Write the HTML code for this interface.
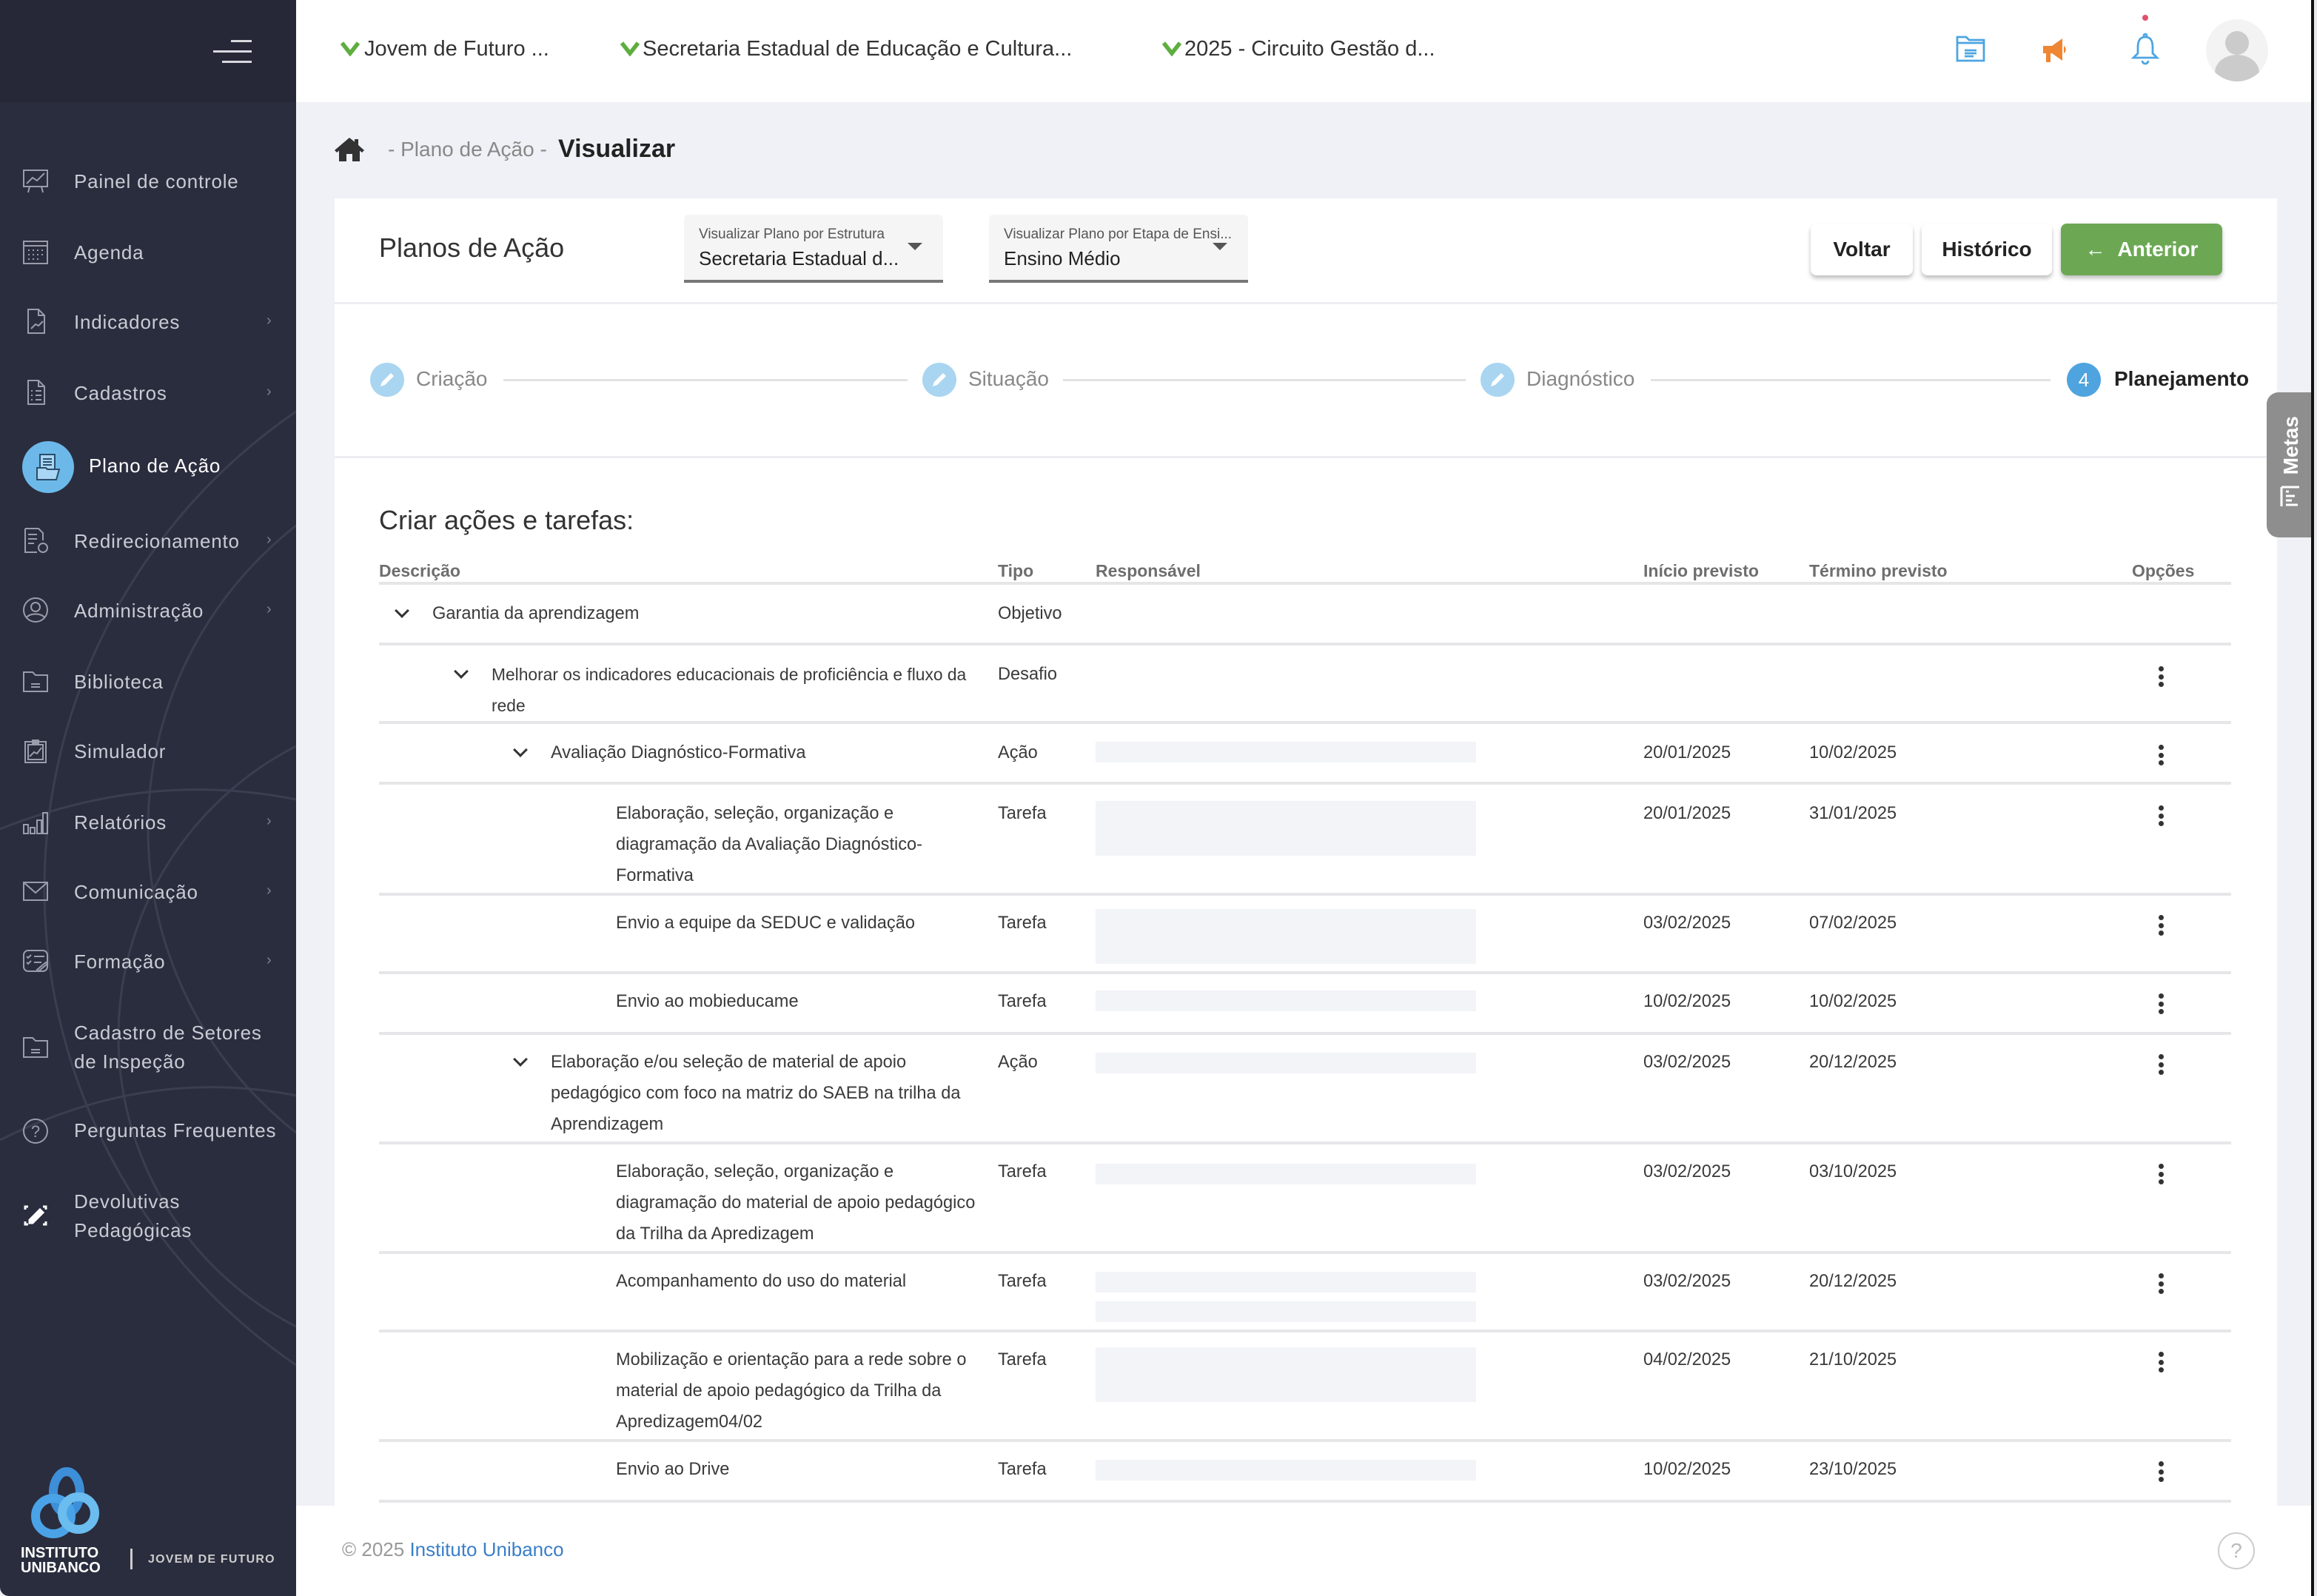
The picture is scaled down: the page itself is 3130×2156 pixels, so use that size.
<!DOCTYPE html>
<html><head><meta charset="utf-8">
<style>
*{margin:0;padding:0;box-sizing:border-box}
html,body{width:3130px;height:2156px;overflow:hidden;background:#1c1e2a}
#r{zoom:2;position:relative;width:1565px;height:1078px;font-family:"Liberation Sans",sans-serif;color:#333;background:#f0f1f6;overflow:hidden}
.a{position:absolute;white-space:nowrap}
#sb{position:absolute;left:0;top:0;width:200px;height:1078px;background:#2a2d3e;overflow:hidden;border-bottom-left-radius:6px}
#sbt{position:absolute;left:0;top:0;width:200px;height:69px;background:#262838}
.mi{position:absolute;left:50px;font-size:13px;color:#c9cbd4;letter-spacing:.4px;line-height:19.5px}
.ic{position:absolute;left:15px;width:18px;height:18px}
.chv{position:absolute;left:180px;font-size:10px;color:#7d8090}
#hd{position:absolute;left:200px;top:0;width:1363px;height:69px;background:#fff}
.hi{font-size:14.5px;color:#333;top:25px}
.card{position:absolute;left:226px;top:134px;width:1312px;height:900px;background:#fff}
.btn{position:absolute;top:151px;height:35px;border-radius:4px;background:#fff;box-shadow:0 2px 3px rgba(0,0,0,.25);font-size:14px;font-weight:bold;color:#222;text-align:center;line-height:35px}
.sel{position:absolute;top:145px;width:175px;height:46px;background:#f5f5f5;border-bottom:2px solid #777;border-radius:3px 3px 0 0}
.sel .l{position:absolute;left:10px;top:8px;font-size:9.5px;color:#555}
.sel .v{position:absolute;left:10px;top:22px;font-size:13px;color:#222}
.sel .c{position:absolute;right:14px;top:19px;width:0;height:0;border-left:5px solid transparent;border-right:5px solid transparent;border-top:5px solid #555}
.stc{position:absolute;top:245px;width:23px;height:23px;border-radius:50%;background:#a9d5f1}
.stl{font-size:14px;color:#888;top:248px}
.th{font-size:11.5px;color:#555;top:379px;font-weight:bold;opacity:.85}
.ln{position:absolute;left:256px;width:1251px;height:2px;background:#e6e6e9}
.t{position:absolute;font-size:11.8px;color:#3a3a3a;line-height:21px;white-space:nowrap}
.bar{position:absolute;left:740px;width:257px;background:#f3f4f8}
.dt{position:absolute;left:1458px;width:4px}
.dt i{display:block;width:3.5px;height:3.5px;border-radius:50%;background:#333;margin-bottom:1.8px}
.cv{position:absolute;width:7px;height:7px;border-right:1.8px solid #333;border-bottom:1.8px solid #333;transform:rotate(45deg)}
</style></head><body><div id="r">

<div id="sb">
<svg class="a" style="left:0;top:0" width="200" height="1078" viewBox="0 0 200 1078" fill="none" stroke="#3b3e50" stroke-width="1.5">
<circle cx="420" cy="600" r="390"/>
<circle cx="360" cy="560" r="260"/>
<circle cx="300" cy="700" r="220"/>
<path d="M0 770 Q100 720 200 740"/>
<path d="M0 560 Q100 520 200 540"/>
</svg>
<div id="sbt"></div>
<div class="a" style="left:156px;top:27px;width:14px;height:1.5px;background:#d8d9df"></div>
<div class="a" style="left:144px;top:34px;width:26px;height:1.5px;background:#d8d9df"></div>
<div class="a" style="left:150px;top:41px;width:20px;height:1.5px;background:#d8d9df"></div>

<svg class="ic" style="top:113px" viewBox="0 0 18 18" fill="none" stroke="#9a9cab" stroke-width="1"><rect x="1" y="2" width="16" height="11"/><path d="M3 11l4-4 3 2 5-5M5 13l-1 4M13 13l1 4"/></svg>
<div class="mi" style="top:113px">Painel de controle</div>
<svg class="ic" style="top:161px" viewBox="0 0 18 18" fill="none" stroke="#9a9cab" stroke-width="1"><rect x="1" y="2" width="16" height="15"/><path d="M1 5h16"/><path d="M4 8h1M7 8h1M10 8h1M13 8h1M4 11h1M7 11h1M10 11h1M13 11h1M4 14h1M7 14h1M10 14h1" stroke-dasharray="1 1"/></svg>
<div class="mi" style="top:161px">Agenda</div>
<svg class="ic" style="top:208px" viewBox="0 0 18 18" fill="none" stroke="#9a9cab" stroke-width="1"><path d="M4 1h7l4 4v12H4z M11 1v4h4"/><path d="M6 14l3-3 2 1 3-3"/></svg>
<div class="mi" style="top:208px">Indicadores</div><div class="chv" style="top:211px">›</div>
<svg class="ic" style="top:256px" viewBox="0 0 18 18" fill="none" stroke="#9a9cab" stroke-width="1"><path d="M4 1h7l4 4v12H4z M11 1v4h4"/><path d="M6 8h1M9 8h4M6 11h1M9 11h4M6 14h1M9 14h4"/></svg>
<div class="mi" style="top:256px">Cadastros</div><div class="chv" style="top:259px">›</div>

<div class="a" style="left:15px;top:298px;width:35px;height:35px;border-radius:50%;background:#6cb9e9"></div>
<svg class="a" style="left:23px;top:306px" width="19" height="19" viewBox="0 0 19 19" fill="#a8d6f4" stroke="#2a4d6b" stroke-width="1"><path d="M4 1h10v14H4z"/><path d="M6 4h6M6 6h6M6 8h6" fill="none"/><path d="M2 10h6l1 1h8l-2 7H2z"/></svg>
<div class="mi" style="left:60px;top:305px;color:#fff">Plano de Ação</div>

<svg class="ic" style="top:356px" viewBox="0 0 18 18" fill="none" stroke="#9a9cab" stroke-width="1"><path d="M2 1h9l3 3v5 M2 1v16h8"/><path d="M4 5h6M4 8h6M4 11h4"/><circle cx="14" cy="14" r="3"/></svg>
<div class="mi" style="top:356px">Redirecionamento</div><div class="chv" style="top:359px">›</div>
<svg class="ic" style="top:403px" viewBox="0 0 18 18" fill="none" stroke="#9a9cab" stroke-width="1"><circle cx="9" cy="9" r="8"/><circle cx="9" cy="7" r="3"/><path d="M3 14c2-3 10-3 12 0"/></svg>
<div class="mi" style="top:403px">Administração</div><div class="chv" style="top:406px">›</div>
<svg class="ic" style="top:451px" viewBox="0 0 18 18" fill="none" stroke="#9a9cab" stroke-width="1"><path d="M1 3h6l2 2h8v11H1z"/><path d="M6 11h6M6 13h6"/></svg>
<div class="mi" style="top:451px">Biblioteca</div>
<svg class="ic" style="top:498px" viewBox="0 0 18 18" fill="none" stroke="#9a9cab" stroke-width="1"><rect x="2" y="3" width="14" height="14"/><rect x="4" y="5" width="10" height="10"/><path d="M7 2h4v2H7zM5 13l3-3 2 1 3-4"/></svg>
<div class="mi" style="top:498px">Simulador</div>
<svg class="ic" style="top:546px" viewBox="0 0 18 18" fill="none" stroke="#9a9cab" stroke-width="1"><rect x="1" y="11" width="3" height="6"/><rect x="5.5" y="13" width="3" height="4"/><rect x="10" y="8" width="3" height="9"/><rect x="14" y="3" width="3" height="14"/></svg>
<div class="mi" style="top:546px">Relatórios</div><div class="chv" style="top:549px">›</div>
<svg class="ic" style="top:593px" viewBox="0 0 18 18" fill="none" stroke="#9a9cab" stroke-width="1"><rect x="1" y="3" width="16" height="12"/><path d="M1 3l8 7 8-7"/></svg>
<div class="mi" style="top:593px">Comunicação</div><div class="chv" style="top:596px">›</div>
<svg class="ic" style="top:640px" viewBox="0 0 18 18" fill="none" stroke="#9a9cab" stroke-width="1"><rect x="1" y="2" width="16" height="14" rx="3"/><path d="M3 6l1 1 2-2M3 10l1 1 2-2M8 6h7M8 10h5M10 15l6-5 1 1-6 5z"/></svg>
<div class="mi" style="top:640px">Formação</div><div class="chv" style="top:643px">›</div>
<svg class="ic" style="top:698px" viewBox="0 0 18 18" fill="none" stroke="#9a9cab" stroke-width="1"><path d="M1 3h6l2 2h8v11H1z"/><path d="M6 11h6M6 13h6"/></svg>
<div class="mi" style="top:688px">Cadastro de Setores<br>de Inspeção</div>
<svg class="ic" style="top:755px" viewBox="0 0 18 18" fill="none" stroke="#9a9cab" stroke-width="1"><circle cx="9" cy="9" r="8"/><text x="9" y="13" font-size="11" text-anchor="middle" fill="#9a9cab" stroke="none" font-family="Liberation Sans">?</text></svg>
<div class="mi" style="top:754px">Perguntas Frequentes</div>
<svg class="ic" style="top:812px" viewBox="0 0 18 18" fill="none" stroke="#fff" stroke-width="1.5"><path d="M2 5V3h2M14 3h2v2M2 13v2h2M14 15h2v-2"/><path d="M5 12l7-7 2 2-7 7H5z" fill="#fff"/></svg>
<div class="mi" style="top:802px">Devolutivas<br>Pedagógicas</div>

<svg class="a" style="left:18px;top:990px" width="54" height="54" viewBox="0 0 54 54" fill="none" stroke-width="6">
<ellipse cx="27" cy="18" rx="9" ry="14" stroke="#3c8fd8"/>
<circle cx="18" cy="34" r="12" stroke="#4aa3e6"/>
<circle cx="35" cy="32" r="11" stroke="#6bbcef"/>
</svg>
<div class="a" style="left:14px;top:1044px;font-size:10px;font-weight:bold;color:#fff;line-height:10px">INSTITUTO<br>UNIBANCO</div>
<div class="a" style="left:88px;top:1046px;width:1.5px;height:14px;background:#ccc"></div>
<div class="a" style="left:100px;top:1049px;font-size:8px;font-weight:bold;color:#ccc;letter-spacing:.6px">JOVEM DE FUTURO</div>
</div>

<div id="hd"></div>
<svg class="a" style="left:230px;top:28px" width="13" height="10" viewBox="0 0 13 10"><path d="M1 1l5.5 7L12 1" fill="none" stroke="#5eae3f" stroke-width="2.8"/></svg>
<div class="a hi" style="left:246px">Jovem de Futuro ...</div>
<svg class="a" style="left:419px;top:28px" width="13" height="10" viewBox="0 0 13 10"><path d="M1 1l5.5 7L12 1" fill="none" stroke="#5eae3f" stroke-width="2.8"/></svg>
<div class="a hi" style="left:434px">Secretaria Estadual de Educação e Cultura...</div>
<svg class="a" style="left:785px;top:28px" width="13" height="10" viewBox="0 0 13 10"><path d="M1 1l5.5 7L12 1" fill="none" stroke="#5eae3f" stroke-width="2.8"/></svg>
<div class="a hi" style="left:800px">2025 - Circuito Gestão d...</div>

<svg class="a" style="left:1321px;top:24px" width="20" height="18" viewBox="0 0 20 18" fill="none" stroke="#4da5e2" stroke-width="1.4"><path d="M1 1h6l2 2h10v14H1z M1 5h18"/><path d="M6 10h8M6 12h8M6 14h6"/></svg>
<svg class="a" style="left:1379px;top:24px" width="22" height="20" viewBox="0 0 22 20" fill="#ef8633"><path d="M1 7h6l7-5v15l-7-5H6v6H3v-6H1z"/><path d="M15 7a3 3 0 010 5z"/></svg>
<div class="a" style="left:1447px;top:10px;width:4px;height:4px;border-radius:50%;background:#e0506a"></div>
<svg class="a" style="left:1439px;top:22px" width="20" height="22" viewBox="0 0 20 22" fill="none" stroke="#4da5e2" stroke-width="1.4"><path d="M10 3c-4 0-5 3-5 7v4l-3 3h16l-3-3v-4c0-4-1-7-5-7z"/><path d="M8 19a2 2 0 004 0"/><circle cx="10" cy="2" r="1"/></svg>
<div class="a" style="left:1490px;top:13px;width:42px;height:42px;border-radius:50%;background:#f3f3f3;overflow:hidden">
<div class="a" style="left:13px;top:8px;width:16px;height:16px;border-radius:50%;background:#cbcbcb"></div>
<div class="a" style="left:6px;top:24px;width:30px;height:24px;border-radius:50% 50% 0 0;background:#cbcbcb"></div>
</div>

<svg class="a" style="left:226px;top:92px" width="20" height="18" viewBox="0 0 20 18" fill="#333"><path d="M10 1L0 9.5l1.5 1.5L3 9.8V17h5v-5h4v5h5V9.8l1.5 1.2L20 9.5 16 6V2h-2.5v1.8z"/></svg>
<div class="a" style="left:262px;top:93px;font-size:14px;color:#888">- Plano de Ação -</div>
<div class="a" style="left:377px;top:91px;font-size:17px;font-weight:bold;color:#222">Visualizar</div>

<div class="card"></div>
<div class="a" style="left:256px;top:157px;font-size:18px;color:#333">Planos de Ação</div>
<div class="sel" style="left:462px"><div class="l">Visualizar Plano por Estrutura</div><div class="v">Secretaria Estadual d...</div><div class="c"></div></div>
<div class="sel" style="left:668px"><div class="l">Visualizar Plano por Etapa de Ensi...</div><div class="v">Ensino Médio</div><div class="c"></div></div>
<div class="btn" style="left:1223px;width:69px">Voltar</div>
<div class="btn" style="left:1298px;width:88px">Histórico</div>
<div class="btn" style="left:1392px;width:109px;background:#6ca854;color:#fff"><span style="font-weight:normal;margin-right:8px">&#8592;</span>Anterior</div>
<div class="a" style="left:226px;top:204px;width:1312px;height:1.5px;background:#eceef2"></div>

<div class="a" style="left:340px;top:256px;width:273px;height:1.5px;background:#e2e2e2"></div>
<div class="a" style="left:718px;top:256px;width:272px;height:1.5px;background:#e2e2e2"></div>
<div class="a" style="left:1115px;top:256px;width:270px;height:1.5px;background:#e2e2e2"></div>
<div class="stc" style="left:250px"></div><div class="stc" style="left:623px"></div><div class="stc" style="left:1000px"></div>
<svg class="a" style="left:255px;top:250px" width="13" height="13" viewBox="0 0 13 13"><path d="M2 11l1-3 6-6 2 2-6 6z" fill="#fff"/></svg>
<svg class="a" style="left:628px;top:250px" width="13" height="13" viewBox="0 0 13 13"><path d="M2 11l1-3 6-6 2 2-6 6z" fill="#fff"/></svg>
<svg class="a" style="left:1005px;top:250px" width="13" height="13" viewBox="0 0 13 13"><path d="M2 11l1-3 6-6 2 2-6 6z" fill="#fff"/></svg>
<div class="a stl" style="left:281px">Criação</div>
<div class="a stl" style="left:654px">Situação</div>
<div class="a stl" style="left:1031px">Diagnóstico</div>
<div class="a" style="left:1396px;top:245px;width:23px;height:23px;border-radius:50%;background:#4fa4df;color:#fff;font-size:13px;text-align:center;line-height:23px">4</div>
<div class="a" style="left:1428px;top:248px;font-size:14px;font-weight:bold;color:#222">Planejamento</div>
<div class="a" style="left:226px;top:308px;width:1312px;height:1.5px;background:#eceef2"></div>

<div class="a" style="left:256px;top:341px;font-size:18px;color:#333">Criar ações e tarefas:</div>
<div class="a th" style="left:256px">Descrição</div>
<div class="a th" style="left:674px">Tipo</div>
<div class="a th" style="left:740px">Responsável</div>
<div class="a th" style="left:1110px">Início previsto</div>
<div class="a th" style="left:1222px">Término previsto</div>
<div class="a th" style="left:1440px">Opções</div>
<div class="ln" style="top:393px"></div>

<div class="cv" style="left:268px;top:409px"></div>
<div class="t" style="left:292px;top:404px">Garantia da aprendizagem</div>
<div class="t" style="left:674px;top:404px">Objetivo</div>
<div class="ln" style="top:434px"></div>

<div class="cv" style="left:308px;top:450px"></div>
<div class="t" style="left:332px;top:445px;font-size:11.4px">Melhorar os indicadores educacionais de proficiência e fluxo da<br>rede</div>
<div class="t" style="left:674px;top:445px">Desafio</div>
<div class="dt" style="top:450px"><i></i><i></i><i></i></div>
<div class="ln" style="top:487px"></div>

<div class="cv" style="left:348px;top:503px"></div>
<div class="t" style="left:372px;top:498px">Avaliação Diagnóstico-Formativa</div>
<div class="t" style="left:674px;top:498px">Ação</div>
<div class="bar" style="top:501px;height:14px"></div>
<div class="t" style="left:1110px;top:498px">20/01/2025</div>
<div class="t" style="left:1222px;top:498px">10/02/2025</div>
<div class="dt" style="top:503px"><i></i><i></i><i></i></div>
<div class="ln" style="top:528px"></div>

<div class="t" style="left:416px;top:539px">Elaboração, seleção, organização e<br>diagramação da Avaliação Diagnóstico-<br>Formativa</div>
<div class="t" style="left:674px;top:539px">Tarefa</div>
<div class="bar" style="top:541px;height:37px"></div>
<div class="t" style="left:1110px;top:539px">20/01/2025</div>
<div class="t" style="left:1222px;top:539px">31/01/2025</div>
<div class="dt" style="top:544px"><i></i><i></i><i></i></div>
<div class="ln" style="top:603px"></div>

<div class="t" style="left:416px;top:613px">Envio a equipe da SEDUC e validação</div>
<div class="t" style="left:674px;top:613px">Tarefa</div>
<div class="bar" style="top:614px;height:37px"></div>
<div class="t" style="left:1110px;top:613px">03/02/2025</div>
<div class="t" style="left:1222px;top:613px">07/02/2025</div>
<div class="dt" style="top:618px"><i></i><i></i><i></i></div>
<div class="ln" style="top:656px"></div>

<div class="t" style="left:416px;top:666px">Envio ao mobieducame</div>
<div class="t" style="left:674px;top:666px">Tarefa</div>
<div class="bar" style="top:669px;height:14px"></div>
<div class="t" style="left:1110px;top:666px">10/02/2025</div>
<div class="t" style="left:1222px;top:666px">10/02/2025</div>
<div class="dt" style="top:671px"><i></i><i></i><i></i></div>
<div class="ln" style="top:697px"></div>

<div class="cv" style="left:348px;top:712px"></div>
<div class="t" style="left:372px;top:707px">Elaboração e/ou seleção de material de apoio<br>pedagógico com foco na matriz do SAEB na trilha da<br>Aprendizagem</div>
<div class="t" style="left:674px;top:707px">Ação</div>
<div class="bar" style="top:711px;height:14px"></div>
<div class="t" style="left:1110px;top:707px">03/02/2025</div>
<div class="t" style="left:1222px;top:707px">20/12/2025</div>
<div class="dt" style="top:712px"><i></i><i></i><i></i></div>
<div class="ln" style="top:771px"></div>

<div class="t" style="left:416px;top:781px">Elaboração, seleção, organização e<br>diagramação do material de apoio pedagógico<br>da Trilha da Apredizagem</div>
<div class="t" style="left:674px;top:781px">Tarefa</div>
<div class="bar" style="top:786px;height:14px"></div>
<div class="t" style="left:1110px;top:781px">03/02/2025</div>
<div class="t" style="left:1222px;top:781px">03/10/2025</div>
<div class="dt" style="top:786px"><i></i><i></i><i></i></div>
<div class="ln" style="top:845px"></div>

<div class="t" style="left:416px;top:855px">Acompanhamento do uso do material</div>
<div class="t" style="left:674px;top:855px">Tarefa</div>
<div class="bar" style="top:859px;height:14px"></div>
<div class="bar" style="top:879px;height:14px"></div>
<div class="t" style="left:1110px;top:855px">03/02/2025</div>
<div class="t" style="left:1222px;top:855px">20/12/2025</div>
<div class="dt" style="top:860px"><i></i><i></i><i></i></div>
<div class="ln" style="top:898px"></div>

<div class="t" style="left:416px;top:908px">Mobilização e orientação para a rede sobre o<br>material de apoio pedagógico da Trilha da<br>Apredizagem04/02</div>
<div class="t" style="left:674px;top:908px">Tarefa</div>
<div class="bar" style="top:910px;height:37px"></div>
<div class="t" style="left:1110px;top:908px">04/02/2025</div>
<div class="t" style="left:1222px;top:908px">21/10/2025</div>
<div class="dt" style="top:913px"><i></i><i></i><i></i></div>
<div class="ln" style="top:972px"></div>

<div class="t" style="left:416px;top:982px">Envio ao Drive</div>
<div class="t" style="left:674px;top:982px">Tarefa</div>
<div class="bar" style="top:986px;height:14px"></div>
<div class="t" style="left:1110px;top:982px">10/02/2025</div>
<div class="t" style="left:1222px;top:982px">23/10/2025</div>
<div class="dt" style="top:987px"><i></i><i></i><i></i></div>
<div class="ln" style="top:1013px"></div>

<div class="a" style="left:200px;top:1017px;width:1363px;height:61px;background:#fff"></div>
<div class="a" style="left:231px;top:1039px;font-size:13px;color:#999">© 2025 <span style="color:#3a7fc8">Instituto Unibanco</span></div>
<div class="a" style="left:1498px;top:1035px;width:25px;height:25px;border-radius:50%;border:1.2px solid #ccc;color:#bbb;font-size:14px;text-align:center;line-height:23px">?</div>

<div class="a" style="left:1531px;top:265px;width:30px;height:98px;background:#8e8e8e;border-radius:8px 0 0 8px"></div>
<div class="a" style="left:1539px;top:281px;font-size:14px;font-weight:bold;color:#fff;writing-mode:vertical-rl;transform:rotate(180deg);line-height:17px">Metas</div>
<svg class="a" style="left:1540px;top:328px" width="14" height="15" viewBox="0 0 14 15" fill="none" stroke="#fff" stroke-width="1.5"><path d="M1 1h12M1 1v13M4 4h2M4 7h6M4 10h4M4 13h8" transform="rotate(0)"/></svg>
<div class="a" style="left:1561px;top:0;width:2px;height:1078px;background:#111"></div>
<div class="a" style="left:1563px;top:0;width:2px;height:1078px;background:#e8e9ee"></div>
</div></body></html>
